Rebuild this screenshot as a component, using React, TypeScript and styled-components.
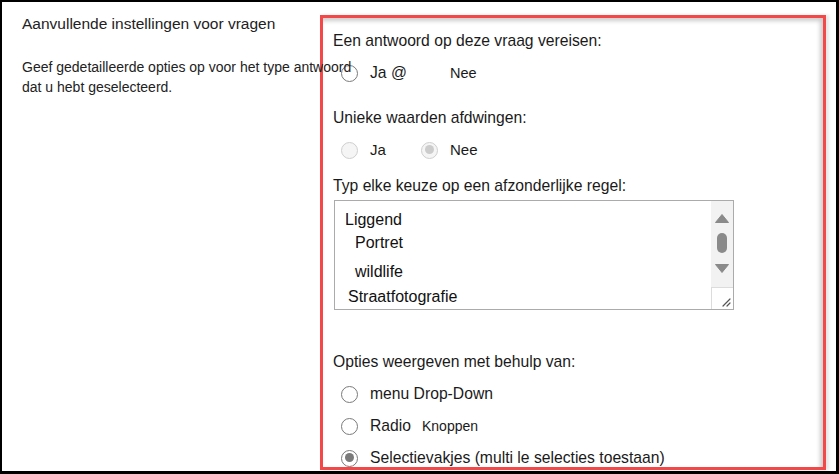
import React from "react";
import styled, { createGlobalStyle, css } from "styled-components";

const GlobalStyle = createGlobalStyle`
  html, body { margin: 0; padding: 0; background: #fff; }
  body { font-family: "Liberation Sans", Arial, sans-serif; color: #1a1a1a; }
  * { box-sizing: border-box; }
`;

const Frame = styled.div`
  width: 839px;
  height: 474px;
  border-style: solid;
  border-color: #000;
  border-width: 2px 3px 3px 2px;
  background: #fff;
  display: flex;
  align-items: flex-start;
  overflow: hidden;
`;

const Intro = styled.div`
  position: relative;
  z-index: 1;
  width: 318px;
  flex-shrink: 0;
  padding: 12px 0 0 20px;
  white-space: nowrap;
`;

const Title = styled.div`
  font-size: 15.5px;
  line-height: 20px;
  color: #222;
`;

const Description = styled.div`
  margin-top: 23px;
  font-size: 14px;
  line-height: 20px;
  color: #222;
`;

const Panel = styled.div`
  margin-top: 13px;
  width: 506px;
  height: 455px;
  flex-shrink: 0;
  border: 3px solid #f44848;
  background: #fff;
  box-shadow: 3px 0 3px rgba(0, 0, 0, 0.1), inset -4px 4px 4px -1px rgba(0, 0, 0, 0.2);
  padding: 13px 0 0 10px;
  display: flex;
  flex-direction: column;
`;

const Label = styled.div<{ $gap?: number }>`
  flex-shrink: 0;
  font-size: 15.7px;
  line-height: 20px;
  color: #1a1a1a;
  margin-top: ${(p) => p.$gap ?? 0}px;
`;

const Row = styled.div<{ $gap?: number }>`
  display: flex;
  align-items: center;
  height: 24px;
  flex-shrink: 0;
  margin-top: ${(p) => p.$gap ?? 0}px;
  padding-left: 8px;
`;

const Option = styled.div`
  display: flex;
  align-items: center;
  width: 80px;
  gap: 12px;
`;

const OptionText = styled.span<{ $size?: number }>`
  font-size: ${(p) => p.$size ?? 15.7}px;
  line-height: 20px;
  color: #1a1a1a;
  white-space: nowrap;
`;

const SubText = styled.span`
  font-size: 14px;
  margin-left: 11px;
`;

const Radio = styled.span<{ $checked?: boolean; $disabled?: boolean; $hidden?: boolean }>`
  position: relative;
  width: 17px;
  height: 17px;
  flex-shrink: 0;
  border-radius: 50%;
  border: 1.5px solid #7a7a7a;
  background: #fff;
  visibility: ${(p) => (p.$hidden ? "hidden" : "visible")};
  ${(p) =>
    p.$disabled &&
    css`
      border-color: #cfcfcf;
      background: #f5f5f5;
    `}
  ${(p) =>
    p.$checked &&
    css`
      &::after {
        content: "";
        position: absolute;
        left: 2.5px;
        top: 2.5px;
        width: 9px;
        height: 9px;
        border-radius: 50%;
        background: ${p.$disabled ? "#cccccc" : "#7a7a7a"};
      }
    `}
`;

const TextBox = styled.div`
  margin-top: 4px;
  margin-left: 1px;
  width: 400px;
  height: 110px;
  flex-shrink: 0;
  border: 1px solid #ababab;
  display: flex;
  background: #fff;
`;

const Lines = styled.div`
  flex: 1;
  padding-top: 7px;
  display: flex;
  flex-direction: column;
`;

const Line = styled.div<{ $indent: number; $gap: number }>`
  font-size: 16px;
  line-height: 24px;
  color: #111;
  padding-left: ${(p) => p.$indent}px;
  margin-top: ${(p) => p.$gap}px;
  white-space: nowrap;
`;

const ScrollColumn = styled.div`
  width: 22px;
  display: flex;
  flex-direction: column;
`;

const Track = styled.div`
  flex: 1;
  background: #f2f2f2;
  display: flex;
  flex-direction: column;
  align-items: center;
  padding-top: 13px;
`;

const Thumb = styled.div`
  margin-top: 10px;
  width: 10px;
  height: 20px;
  border-radius: 5px;
  background: #8a8a8a;
`;

const Arrow = styled.svg<{ $gap?: number }>`
  display: block;
  margin-top: ${(p) => p.$gap ?? 0}px;
`;

const Corner = styled.div`
  height: 22px;
  border-top: 1px solid #dcdcdc;
  border-left: 1px solid #dcdcdc;
  background: #fff;
  display: flex;
  align-items: flex-end;
  justify-content: flex-end;
  padding: 0 2px 2px 0;
`;

const choices = [
  { text: "Liggend", indent: 10, gap: 0 },
  { text: "Portret", indent: 20, gap: -1 },
  { text: "wildlife", indent: 20, gap: 5 },
  { text: "Straatfotografie", indent: 13, gap: 1 },
];

export default function App() {
  return (
    <>
      <GlobalStyle />
      <Frame>
        <Intro>
          <Title>Aanvullende instellingen voor vragen</Title>
          <Description>
            Geef gedetailleerde opties op voor het type antwoord
            <br />
            dat u hebt geselecteerd.
          </Description>
        </Intro>
        <Panel>
          <Label>Een antwoord op deze vraag vereisen:</Label>
          <Row $gap={10}>
            <Option>
              <Radio />
              <OptionText>Ja @</OptionText>
            </Option>
            <Option>
              <Radio $hidden />
              <OptionText $size={14.5}>Nee</OptionText>
            </Option>
          </Row>

          <Label $gap={23}>Unieke waarden afdwingen:</Label>
          <Row $gap={10}>
            <Option>
              <Radio $disabled />
              <OptionText $size={15}>Ja</OptionText>
            </Option>
            <Option>
              <Radio $disabled $checked />
              <OptionText $size={15}>Nee</OptionText>
            </Option>
          </Row>

          <Label $gap={14}>Typ elke keuze op een afzonderlijke regel:</Label>
          <TextBox>
            <Lines>
              {choices.map((c) => (
                <Line key={c.text} $indent={c.indent} $gap={c.gap}>
                  {c.text}
                </Line>
              ))}
            </Lines>
            <ScrollColumn>
              <Track>
                <Arrow width="14" height="9" viewBox="0 0 14 9">
                  <path d="M7 0.5 L13.5 8.5 L0.5 8.5 Z" fill="#8a8a8a" strokeLinejoin="round" stroke="#8a8a8a" strokeWidth="1" />
                </Arrow>
                <Thumb />
                <Arrow $gap={11} width="14" height="9" viewBox="0 0 14 9">
                  <path d="M0.5 0.5 L13.5 0.5 L7 8.5 Z" fill="#8a8a8a" strokeLinejoin="round" stroke="#8a8a8a" strokeWidth="1" />
                </Arrow>
              </Track>
              <Corner>
                <svg width="10" height="10" viewBox="0 0 10 10">
                  <path d="M9 2 L2 9 M9 6 L6 9" stroke="#555" strokeWidth="1.2" strokeLinecap="round" />
                </svg>
              </Corner>
            </ScrollColumn>
          </TextBox>

          <Label $gap={42}>Opties weergeven met behulp van:</Label>
          <Row $gap={10}>
            <Option>
              <Radio />
              <OptionText>menu Drop-Down</OptionText>
            </Option>
          </Row>
          <Row $gap={8}>
            <Option>
              <Radio />
              <OptionText>
                Radio<SubText>Knoppen</SubText>
              </OptionText>
            </Option>
          </Row>
          <Row $gap={8}>
            <Option>
              <Radio $checked />
              <OptionText>Selectievakjes (multi le selecties toestaan)</OptionText>
            </Option>
          </Row>
        </Panel>
      </Frame>
    </>
  );
}
